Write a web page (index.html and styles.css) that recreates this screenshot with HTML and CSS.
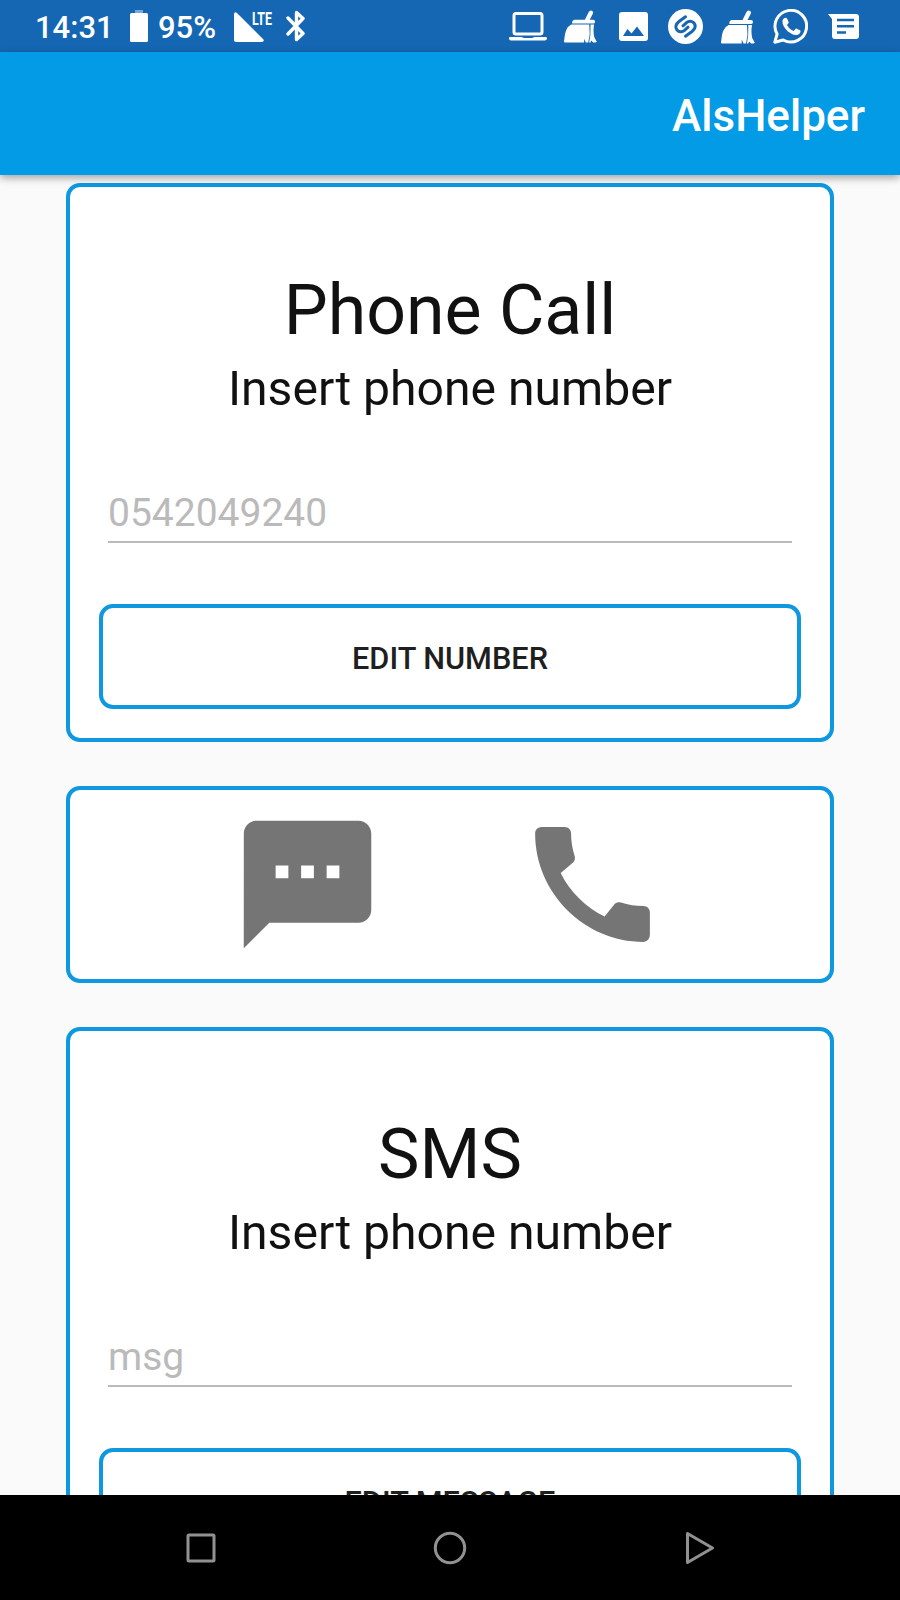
FILE: index.html
```html
<!DOCTYPE html>
<html lang="en">
<head>
<meta charset="utf-8">
<title>AlsHelper</title>
<link rel="stylesheet" href="styles.css">
</head>
<body>
<svg class="defs" width="0" height="0">
  <symbol id="broom" viewBox="0 0 34 34">
    <path fill="currentColor" d="M10.500 10h11l4-8q1.300-2.300 3.200-1.300t1.100 3L26.500 10H30q2 0 2 2t-1.800 2H8.500q-.8-3 2-4z"/>
    <path fill="currentColor" d="M7.500 15H26l.5 10-1.500 8.500h-2.500l-1.800-4v4H1q-1.500-.3-.8-2.500Q1 18 7.500 15zM27.300 15H31q-1.200 7 .2 13l2.600 4.800-1.300.7h-2.400l-2-2-.8 2h-1.400l1.300-8z"/>
  </symbol>
</svg>
<div class="screen">
  <header class="status-bar">
    <span class="clock">14:31</span>
    <svg class="battery" viewBox="0 0 18 32"><path fill="#7ba7d6" d="M5 0h8v3H5z"/><rect y="3" width="18" height="29" rx="1.500" fill="#fff"/></svg>
    <span class="percent">95%</span>
    <svg class="signal" viewBox="0 0 30 30"><path fill="#fff" d="M0 2Q.5-1 3 1l26 26q2 2-.8 3H2q-2 0-2-2z"/></svg>
    <span class="lte">LTE</span>
    <svg class="bluetooth" viewBox="0 0 20 32"><path fill="none" stroke="#fff" stroke-width="3.400" stroke-linejoin="round" stroke-linecap="round" d="M2 8l15 15.500-6.500 6v-27L17 8.500 2 24"/></svg>
    <div class="notifications">
      <svg class="laptop" viewBox="0 0 38 30"><rect x="5" y="1.500" width="28" height="20.500" rx="2" fill="none" stroke="#fff" stroke-width="3"/><path fill="#fff" d="M1 25h11.500q1.500 1 3 1h7q1.500 0 3-1H37q1 0 1 1.500T36 28.500H2Q0 28.500 0 26.500T1 25z"/></svg>
      <svg class="broom"><use href="#broom"/></svg>
      <svg class="photo" viewBox="0 0 29 29"><path fill="#fff" fill-rule="evenodd" d="M3 0h23q3 0 3 3v23q0 3-3 3H3q-3 0-3-3V3q0-3 3-3zM4 24h21l-7-9.500-5.500 7-4-4.500z"/></svg>
      <svg class="shazam" viewBox="0 0 35 35"><circle cx="17.500" cy="17.500" r="17.500" fill="#fff"/><path fill="none" stroke="#1567b3" stroke-width="3" stroke-linecap="round" d="M17.500 7.800l-6.500 4.700C7.500 15.200 7 18.500 9 21c2 2.400 5.300 2.300 7.500.4l3.500-3.200M17.500 27.200l6.500-4.700c3.500-2.700 4-6 2-8.500-2-2.400-5.300-2.300-7.500-.4L15 16.800"/></svg>
      <svg class="broom second"><use href="#broom"/></svg>
      <svg class="whatsapp" viewBox="0 0 35 35"><path fill="none" stroke="#fff" stroke-width="3" stroke-linejoin="round" d="M1.800 33.200L4.100 25A15.800 15.800 0 1 1 10.200 31z"/><path fill="#fff" d="M10.800 9.600c1-1 2-.9 2.700-.7.4.2.6.6.8 1l1.300 3.100c.2.700-.2 1.300-.6 1.800l-1 1.300c1.700 3 3.800 4.700 6.700 5.900l1.700-2c.4-.5.9-.5 1.400-.3l3.100 1.500c.6.300.7.700.6 1.300-.2 2.300-1.900 3.500-4.200 3.600-3.600-.1-7.700-2.500-10.900-6.400-2.400-3-3.600-6.500-2.700-8.700.2-.6.600-1 1.100-1.400z"/></svg>
      <svg class="chat" viewBox="0 0 31 25"><path fill="#fff" d="M0 0h28q3 0 3 3v19q0 3-3 3H7q-3 0-3-3V5z"/><path stroke="#1567b3" stroke-width="2.600" d="M9 6h17M9 12.300h17M9 18.500h9"/></svg>
    </div>
  </header>
  <div class="toolbar"><h1 class="app-name">AlsHelper</h1></div>
  <main class="content">
    <section class="card">
      <h2 class="card-title">Phone Call</h2>
      <p class="card-subtitle">Insert phone number</p>
      <div class="field">0542049240</div>
      <button class="edit-button">EDIT NUMBER</button>
    </section>
    <section class="card actions">
      <svg class="action" viewBox="0 0 24 24"><path fill="#757575" d="M20 2H4c-1.100 0-1.990.9-1.990 2L2 22l4-4h14c1.100 0 2-.9 2-2V4c0-1.100-.9-2-2-2zM9 11H7V9h2v2zm4 0h-2V9h2v2zm4 0h-2V9h2v2z"/></svg>
      <svg class="action" viewBox="0 0 24 24"><path fill="#757575" d="M20.010 15.380c-1.230 0-2.420-.2-3.530-.56-.35-.12-.74-.03-1.010.24l-1.570 1.970c-2.830-1.350-5.480-3.900-6.890-6.830l1.950-1.660c.27-.28.35-.67.24-1.020-.37-1.110-.56-2.300-.56-3.530 0-.54-.45-.99-.99-.99H4.190C3.650 3 3 3.240 3 3.990 3 13.280 10.730 21 20.010 21c.71 0 .99-.63.99-1.180v-3.450c0-.54-.45-.99-.99-.99z"/></svg>
    </section>
    <section class="card">
      <h2 class="card-title">SMS</h2>
      <p class="card-subtitle">Insert phone number</p>
      <div class="field">msg</div>
      <button class="edit-button">EDIT MESSAGE</button>
    </section>
  </main>
  <nav class="nav-bar">
    <svg class="nav-icon" viewBox="0 0 34 34"><rect x="4" y="4" width="26" height="26" rx="1"/></svg>
    <svg class="nav-icon" viewBox="0 0 34 34"><circle cx="17" cy="17" r="14.700"/></svg>
    <svg class="nav-icon" viewBox="0 0 34 34"><path d="M5.500 2.500v29L30.500 17z"/></svg>
  </nav>
</div>
</body>
</html>
```

FILE: styles.css
```css
* { box-sizing: border-box; }
body { margin: 0; font-family: Roboto, "Liberation Sans", sans-serif; }
h1, h2, p { margin: 0; font-weight: 400; }
svg { display: block; flex: none; }
.defs { position: absolute; }

.screen {
  display: flex;
  flex-direction: column;
  width: 900px;
  height: 1600px;
  overflow: hidden;
  background: #fafafa;
}

.status-bar {
  display: flex;
  flex: none;
  align-items: flex-start;
  height: 52px;
  padding: 9px 41px 0 35px;
  background: #1567b3;
  color: #fff;
}
.clock, .percent {
  padding-top: 1px;
  font-size: 31px;
  font-weight: 500;
  line-height: 36px;
  white-space: nowrap;
}
.clock { width: 95px; }
.battery { width: 18px; height: 32px; margin-top: 1px; }
.percent { width: 76px; margin-left: 10px; }
.signal { width: 30px; height: 30px; margin-top: 3px; }
.lte {
  width: 23px;
  margin: 0 0 0 -12px;
  font-size: 19px;
  font-weight: 700;
  line-height: 19px;
  transform: scaleX(.65);
  transform-origin: left;
}
.bluetooth { width: 20px; height: 32px; margin: 1px 0 0 11px; }
.notifications { display: flex; margin-left: auto; }
.laptop { width: 38px; height: 30px; margin-top: 3px; }
.broom { width: 33px; height: 33px; margin: 1px 0 0 17px; }
.photo { width: 29px; height: 29px; margin: 3px 0 0 22px; }
.shazam { width: 35px; height: 35px; margin-left: 20px; }
.second { width: 34px; height: 34px; margin-left: 18px; }
.whatsapp { width: 35px; height: 35px; margin-left: 18px; }
.chat { width: 31px; height: 25px; margin: 5px 0 0 20px; }

.toolbar {
  position: relative;
  z-index: 1;
  display: flex;
  flex: none;
  align-items: center;
  justify-content: flex-end;
  height: 123px;
  padding: 4px 35px 0 0;
  background: #039be5;
  box-shadow: 0 3px 8px rgba(0, 0, 0, .35);
}
.app-name {
  color: #fff;
  font-size: 44px;
  font-weight: 500;
  line-height: 52px;
}

.content {
  display: flex;
  flex: 1;
  flex-direction: column;
  gap: 44px;
  min-height: 0;
  padding: 8px 66px 0;
  overflow: hidden;
}
.card {
  display: flex;
  flex: none;
  flex-direction: column;
  height: 559px;
  padding: 82px 29px 0;
  border: 4px solid #0d98e0;
  border-radius: 14px;
  background: #fff;
}
.card-title, .card-subtitle { color: #111; text-align: center; }
.card-title { font-size: 69.800px; line-height: 82px; }
.card-subtitle { margin-top: 10px; font-size: 48.100px; line-height: 56px; }
.field {
  height: 60px;
  margin: 66px 9px 0;
  padding-top: 7px;
  border-bottom: 2px solid #bababa;
  color: #bababa;
  font-size: 39px;
  line-height: 46px;
}
.edit-button {
  flex: none;
  height: 105px;
  margin-top: 61px;
  padding: 4px 0 0;
  border: 4px solid #0d98e0;
  border-radius: 14px;
  background: #fff;
  color: #1f1f1f;
  font: 500 30.700px/36px Roboto, "Liberation Sans", sans-serif;
}
.actions {
  flex-direction: row;
  align-items: center;
  justify-content: center;
  gap: 131.500px;
  height: 197px;
  padding: 0;
}
.action { width: 153px; height: 153px; }

.nav-bar {
  display: flex;
  flex: none;
  align-items: center;
  justify-content: center;
  gap: 215px;
  height: 105px;
  background: #000;
}
.nav-icon {
  width: 34px;
  height: 34px;
  fill: none;
  stroke: #919191;
  stroke-width: 3;
  stroke-linejoin: round;
}
```
